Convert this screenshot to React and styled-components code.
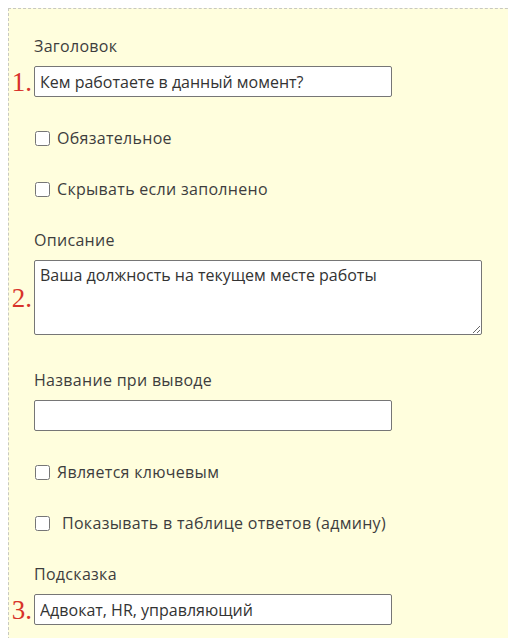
import React from "react";
import styled, { createGlobalStyle } from "styled-components";

const GlobalStyle = createGlobalStyle`
  body {
    margin: 8px;
    background: #ffffff;
    font-family: "Open Sans", "Liberation Sans", sans-serif;
    color: #3a3a3a;
  }
`;

const fields = [
  { type: "input", label: "Заголовок", value: "Кем работаете в данный момент?", mark: "1." },
  { type: "check", label: "Обязательное" },
  { type: "check", label: "Скрывать если заполнено" },
  { type: "textarea", label: "Описание", value: "Ваша должность на текущем месте работы", mark: "2." },
  { type: "input", label: "Название при выводе", value: "" },
  { type: "check", label: "Является ключевым" },
  { type: "check", label: "Показывать в таблице ответов (админу)", spaced: true },
  { type: "input", label: "Подсказка", value: "Адвокат, HR, управляющий", mark: "3." },
];

export default function App() {
  return (
    <>
      <GlobalStyle />
      <Panel>
        {fields.map((f, i) =>
          f.type === "check" ? (
            <CheckRow key={i} $spaced={f.spaced}>
              <Checkbox type="checkbox" />
              <span>{f.label}</span>
            </CheckRow>
          ) : (
            <Field key={i} $tall={f.type === "textarea"}>
              <Label>{f.label}</Label>
              <Control>
                {f.mark && <Mark>{f.mark}</Mark>}
                {f.type === "textarea" ? (
                  <TextArea defaultValue={f.value} />
                ) : (
                  <TextInput type="text" defaultValue={f.value} />
                )}
              </Control>
            </Field>
          )
        )}
      </Panel>
    </>
  );
}

const Panel = styled.div`
  background: #fffedd;
  border: 1px dashed #c8c8c0;
  border-bottom: none;
  width: 498px;
  padding: 27px 0 40px 25px;
  display: flex;
  flex-direction: column;
  gap: 31px;
`;

const Field = styled.div`
  display: flex;
  flex-direction: column;
  gap: 10px;
  margin-bottom: ${(p) => (p.$tall ? "4px" : "0")};
`;

const Label = styled.div`
  font-size: 16px;
  line-height: 20px;
  letter-spacing: 0.3px;
  color: #3d3d3d;
`;

const Control = styled.div`
  position: relative;
  display: flex;
`;

const Mark = styled.span`
  position: absolute;
  right: 100%;
  top: 50%;
  transform: translateY(-50%);
  margin-right: 2px;
  font-family: "Liberation Serif", serif;
  font-size: 27px;
  line-height: 1;
  color: #d8332a;
`;

const TextInput = styled.input`
  box-sizing: border-box;
  width: 358px;
  height: 31px;
  margin: 0;
  padding: 0 5px;
  border: 1px solid #767676;
  border-radius: 2px;
  background: #fff;
  font-family: inherit;
  font-size: 16px;
  color: #333;
  outline: none;
`;

const TextArea = styled.textarea`
  box-sizing: border-box;
  width: 448px;
  height: 75px;
  margin: 0;
  padding: 3px 5px;
  border: 1px solid #767676;
  border-radius: 2px;
  background: #fff;
  font-family: inherit;
  font-size: 16px;
  color: #333;
  outline: none;
`;

const CheckRow = styled.label`
  display: flex;
  align-items: center;
  gap: ${(p) => (p.$spaced ? "12px" : "7px")};
  font-size: 16px;
  line-height: 20px;
  letter-spacing: 0.3px;
  color: #3d3d3d;
`;

const Checkbox = styled.input`
  width: 15px;
  height: 15px;
  margin: 0 0 0 1px;
`;
